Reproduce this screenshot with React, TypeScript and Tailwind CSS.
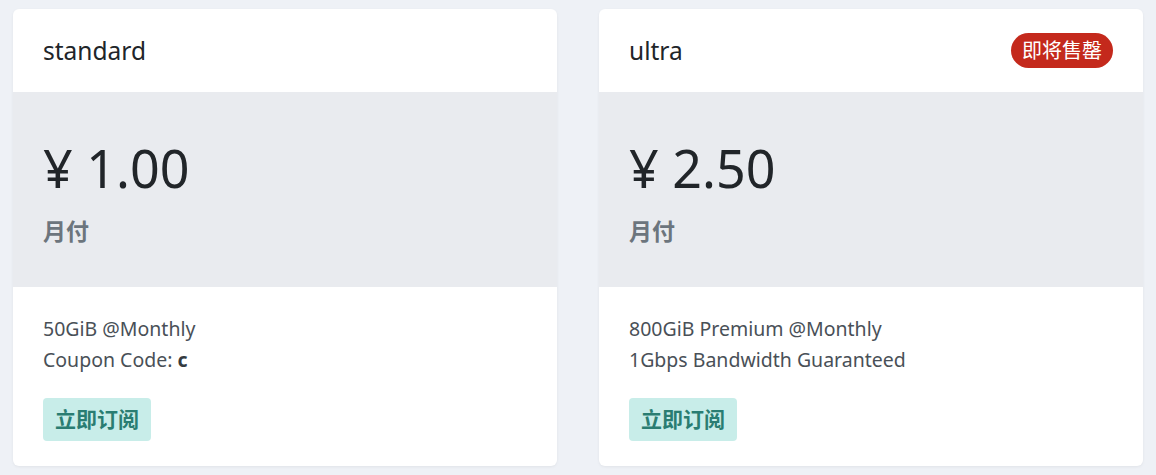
import React from "react";

const font = { fontFamily: '"Noto Sans", "Noto Sans CJK SC", sans-serif' };

type Plan = { name: string; price: string; lines: React.ReactNode[]; badge?: string };

const plans: Plan[] = [
  {
    name: "standard",
    price: "¥ 1.00",
    lines: ["50GiB @Monthly", <>Coupon Code: <b className="font-bold text-[#343a40]">c</b></>],
  },
  {
    name: "ultra",
    price: "¥ 2.50",
    lines: ["800GiB Premium @Monthly", "1Gbps Bandwidth Guaranteed"],
    badge: "即将售罄",
  },
];

function Card({ p }: { p: Plan }) {
  return (
    <div className="w-[544px] h-[457px] bg-white rounded-[6px] shadow-[0_1px_3px_rgba(0,0,0,0.06)] overflow-hidden flex flex-col">
      <div className="h-[83px] flex items-center justify-between pl-[30px] pr-[30px]">
        <span className="text-[24.5px] text-[#212529] pt-[1px]">{p.name}</span>
        {p.badge && (
          <span className="h-[35px] px-[11px] rounded-full bg-[#c4291c] text-white text-[20px] flex items-center leading-none">
            {p.badge}
          </span>
        )}
      </div>
      <div className="h-[195px] bg-[#e9ebef] px-[30px] flex flex-col pt-[44px]">
        <div className="text-[52px] leading-[64px] text-[#212529]">{p.price}</div>
        <div className="mt-[16px] text-[23px] leading-[31px] font-bold text-[#6c757d]">月付</div>
      </div>
      <div className="flex-1 px-[30px] pt-[26px] flex flex-col">
        {p.lines.map((l, i) => (
          <div key={i} className="text-[19.5px] leading-[31px] text-[#495057]">
            {l}
          </div>
        ))}
        <div className="mt-[23px]">
          <span className="inline-flex items-center h-[43px] px-[12px] rounded-[4px] bg-[#c8ede9] text-[#2a7d72] text-[21px] font-bold">
            立即订阅
          </span>
        </div>
      </div>
    </div>
  );
}

export default function App() {
  return (
    <div style={font} className="w-[1156px] h-[475px] bg-[#eef1f6] pt-[9px] pl-[13px] flex gap-[42px]">
      {plans.map((p) => (
        <Card key={p.name} p={p} />
      ))}
    </div>
  );
}
